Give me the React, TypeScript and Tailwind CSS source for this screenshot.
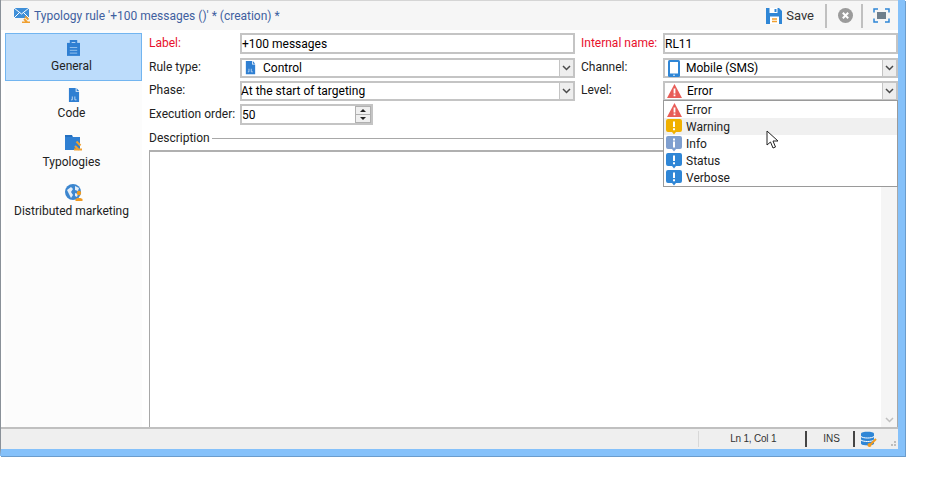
import type { ReactNode } from "react";

const font = "font-['Roboto','Noto_Sans',sans-serif]";

function DocIcon({ size = 14 }: { size?: number }) {
  return (
    <svg width={size} height={size * 1.2} viewBox="0 0 14 17" className="shrink-0">
      <path d="M1 0h8v4.500h4V17H1z" fill="#2f7fd2" />
      <path d="M10 0l3 3.500h-3z" fill="#2f7fd2" />
      <path d="M5 10v4M5 14H3.500M8 10v4M8 14h2" stroke="#cfe3f7" strokeWidth="1" fill="none" />
    </svg>
  );
}

function ClipboardIcon() {
  return (
    <svg width="13" height="16" viewBox="0 0 14 17">
      <path d="M0 3h14v14H0z" fill="#2f7fd2" />
      <path d="M4 3V1h6v2" fill="none" stroke="#2f7fd2" strokeWidth="2" />
      <path d="M3 8h8M3 11h8M3 14h8" stroke="#9cc6ee" strokeWidth="1" />
    </svg>
  );
}

function FolderIcon() {
  return (
    <svg width="18" height="16" viewBox="0 0 18 16">
      <path d="M0 0h7l1 2h7v13H0z" fill="#2f7fd2" />
      <path d="M0 1h7" stroke="#1d62ad" strokeWidth="1" />
      <path d="M9 14.500h8M14 15l-4-4M11.500 6.500l4 4" stroke="#f0a030" strokeWidth="2.200" fill="none" />
    </svg>
  );
}

function GlobeIcon() {
  return (
    <svg width="18" height="17" viewBox="0 0 18 17">
      <circle cx="8" cy="8" r="8" fill="#3c86cf" />
      <path d="M2 6l4-3 2 2-2 3 2 3-2 3-2-4zM10 2l4 2-1 3-3-1zM10 9l3 1-1 3-2-1z" fill="#e4eef8" />
      <circle cx="14" cy="9" r="2.200" fill="#ee9a22" />
      <path d="M10.500 17v-1.500c0-2 7-2 7 0V17z" fill="#ee9a22" />
    </svg>
  );
}

function MailIcon() {
  return (
    <svg width="17" height="15" viewBox="0 0 17 15">
      <path d="M0 0h15v10H0z" fill="#3f8fd8" />
      <path d="M0 0l7.500 6L15 0M0 10l5.500-5.500M15 10L9.500 4.500" stroke="#fff" strokeWidth="1" fill="none" />
      <path d="M8 14.500h8M13 14l-3-3M11 8.500l3.500 3" stroke="#f0a030" strokeWidth="1.800" fill="none" />
    </svg>
  );
}

function SaveIcon() {
  return (
    <svg width="16" height="16" viewBox="0 0 16 16">
      <path d="M0 0h13l3 3v13H0z" fill="#2f86d6" />
      <path d="M3.500 0h8v5h-8z" fill="#fff" />
      <path d="M8.500 1h2v3h-2z" fill="#2f86d6" />
      <path d="M4 8.500h9V16H4z" fill="#fff" />
      <path d="M6 11h5M6 13.500h5" stroke="#f0a030" strokeWidth="1.500" />
    </svg>
  );
}

function CloseCircleIcon() {
  return (
    <svg width="15" height="15" viewBox="0 0 15 15">
      <circle cx="7.500" cy="7.500" r="7.500" fill="#9b9b9b" />
      <path d="M4.800 4.800l5.400 5.400M10.200 4.800l-5.400 5.400" stroke="#fff" strokeWidth="2" />
    </svg>
  );
}

function FullscreenIcon() {
  return (
    <svg width="17" height="15" viewBox="0 0 17 15">
      <path d="M1 4.500V1h4M12 1h4v3.500M16 10.500V14h-4M5 14H1v-3.500" fill="none" stroke="#2f86d6" strokeWidth="1.500" />
      <path d="M4 4h9v7H4z" fill="#6f7f8c" />
    </svg>
  );
}

function MobileIcon() {
  return (
    <svg width="12" height="17" viewBox="0 0 12 17" className="shrink-0">
      <rect x="0" y="0" width="12" height="17" rx="1.500" fill="#2f86d6" />
      <path d="M2 2h8v11.500H2z" fill="#fff" />
      <circle cx="6" cy="15.200" r="0.800" fill="#fff" />
    </svg>
  );
}

function TriangleIcon() {
  return (
    <svg width="15" height="14" viewBox="0 0 15 14" className="shrink-0">
      <path d="M7.500 0L15 14H0z" fill="#e85d58" />
      <path d="M7.500 4.500v5M7.500 10.500v1.800" stroke="#fff" strokeWidth="1.800" />
    </svg>
  );
}

function BubbleIcon({ color, glyph }: { color: string; glyph: "!" | "i" }) {
  return (
    <svg width="16" height="16" viewBox="0 0 16 16" className="shrink-0">
      <path d="M2 0h12a2 2 0 012 2v9a2 2 0 01-2 2h-4l-2 2.500L6 13H2a2 2 0 01-2-2V2a2 2 0 012-2z" fill={color} />
      {glyph === "!" ? (
        <path d="M8 2.500v5.500M8 9.300v2" stroke="#fff" strokeWidth="2" />
      ) : (
        <path d="M8 2.500v2M8 5.500v6" stroke="#fff" strokeWidth="2" />
      )}
    </svg>
  );
}

function DbIcon() {
  return (
    <svg width="16" height="16" viewBox="0 0 16 16">
      <path d="M0 2.500C0 0 13 0 13 2.500v10c0 2.500-13 2.500-13 0z" fill="#2f86d6" />
      <path d="M0 5.500c2 2 11 2 13 0M0 9c2 2 11 2 13 0" stroke="#fff" strokeWidth="1" fill="none" />
      <path d="M8 15l7-7" stroke="#f09a20" strokeWidth="2" />
      <circle cx="8.500" cy="14" r="2" fill="#f09a20" />
    </svg>
  );
}

function Chevron() {
  return (
    <svg width="9" height="6" viewBox="0 0 9 6">
      <path d="M1 1l3.500 3.500L8 1" fill="none" stroke="#4a4a4a" strokeWidth="1.500" />
    </svg>
  );
}

function Combo({ children, className }: { children: ReactNode; className: string }) {
  return (
    <div className={`flex items-stretch border-2 border-[#c4c4c4] bg-white ${className}`}>
      <div className="flex min-w-0 flex-1 items-center">{children}</div>
      <div className="flex w-[14px] items-center justify-center border-l border-[#c4c4c4] bg-[#eeeeee]">
        <Chevron />
      </div>
    </div>
  );
}

function Label({ children, red, className = "" }: { children: ReactNode; red?: boolean; className?: string }) {
  return <div className={`-translate-y-px whitespace-nowrap ${red ? "text-[#e8102c]" : "text-[#222222]"} ${className}`}>{children}</div>;
}

function NavItem({ icon, label, active, className = "", labelClassName = "mt-[1px]" }: { icon: ReactNode; label: string; active?: boolean; className?: string; labelClassName?: string }) {
  return (
    <div
      className={`flex h-[48px] flex-col items-center pt-[5px] ${active ? "border border-[#72b5f0] bg-[#bcdcfb]" : ""} ${className}`}
    >
      <div className="flex h-[18px] items-center justify-center">{icon}</div>
      <div className={`whitespace-nowrap pr-[4px] leading-[16px] text-[#222222] ${labelClassName}`}>{label}</div>
    </div>
  );
}

const levels = [
  { name: "Error", icon: <TriangleIcon /> },
  { name: "Warning", icon: <BubbleIcon color="#f0b000" glyph="!" /> },
  { name: "Info", icon: <BubbleIcon color="#7f9fcf" glyph="i" /> },
  { name: "Status", icon: <BubbleIcon color="#2f86d6" glyph="!" /> },
  { name: "Verbose", icon: <BubbleIcon color="#2f86d6" glyph="!" /> },
];

export default function App() {
  return (
    <div className={`h-[477px] w-[926px] overflow-hidden bg-white text-[12px] leading-[16px] ${font}`}>
      <div className="flex h-[456px] w-[905px] flex-col border-r-[7px] border-b-[7px] border-[#85c1fa] border-l border-l-[#8a9199] shadow-[1px_1px_0_#6b9ccc]">
        {/* Title bar */}
        <div className="flex h-[30px] shrink-0 items-center border-t border-[#d5d5d5] bg-[#f6f6f6] pl-[13px] pr-[8px]">
          <MailIcon />
          <div className="ml-[3px] flex-1 text-[#3f5f9f]">Typology rule '+100 messages ()' * (creation) *</div>
          <SaveIcon />
          <div className="ml-[4px] text-[13px] text-[#333333]">Save</div>
          <div className="ml-[11px] h-[24px] w-[2px] bg-[#c0c0c0]" />
          <div className="ml-[11px]"><CloseCircleIcon /></div>
          <div className="ml-[8px] h-[24px] w-[2px] bg-[#c0c0c0]" />
          <div className="ml-[10px]"><FullscreenIcon /></div>
        </div>

        <div className="flex min-h-0 flex-1 bg-white">
          {/* Sidebar */}
          <div className="ml-[4px] flex w-[137px] shrink-0 flex-col bg-[#fcfcfc] pt-[3px]">
            <NavItem icon={<ClipboardIcon />} label="General" active />
            <NavItem icon={<DocIcon size={12} />} label="Code" />
            <NavItem icon={<FolderIcon />} label="Typologies" labelClassName="mt-[2px]" />
            <NavItem icon={<GlobeIcon />} label="Distributed marketing" className="mt-[1px]" labelClassName="mt-[2px]" />
          </div>

          {/* Form */}
          <div className="relative ml-[7px] flex min-w-0 flex-1 flex-col pt-[3px]">
            <div className="flex h-[21px] items-center">
              <Label red className="w-[91px]">Label:</Label>
              <div className="flex h-[21px] w-[335px] items-center border-2 border-[#c4c4c4]">+100 messages</div>
              <Label red className="ml-[6px] w-[82px]">Internal name:</Label>
              <div className="flex h-[21px] flex-1 items-center border-2 border-[#c4c4c4]">RL11</div>
            </div>
            <div className="mt-[4px] flex h-[20px] items-center">
              <Label className="w-[91px]">Rule type:</Label>
              <Combo className="h-[20px] w-[335px]">
                <div className="ml-[3px]"><DocIcon size={11} /></div>
                <span className="ml-[7px]">Control</span>
              </Combo>
              <Label className="ml-[6px] w-[82px]">Channel:</Label>
              <Combo className="h-[20px] flex-1">
                <div className="ml-[3px]"><MobileIcon /></div>
                <span className="ml-[6px]">Mobile (SMS)</span>
              </Combo>
            </div>
            <div className="mt-[3px] flex h-[20px] items-center">
              <Label className="w-[91px]">Phase:</Label>
              <Combo className="h-[20px] w-[335px]">
                <span className="-ml-px">At the start of targeting</span>
              </Combo>
              <Label className="ml-[6px] w-[82px]">Level:</Label>
              <Combo className="h-[20px] flex-1">
                <div className="ml-[2px]"><TriangleIcon /></div>
                <span className="ml-[5px]">Error</span>
              </Combo>
            </div>
            <div className="mt-[3px] flex h-[21px] items-center">
              <Label className="w-[91px]">Execution order:</Label>
              <div className="flex h-[21px] w-[133px] items-center border-2 border-[#c4c4c4]">
                <span className="flex-1">50</span>
                <div className="flex h-[17px] w-[16px] flex-col border border-[#b0b0b0]">
                  <div className="flex flex-1 items-center justify-center border-b border-[#b0b0b0] bg-[#efefef]">
                    <div className="h-0 w-0 border-x-[3px] border-b-[3px] border-x-transparent border-b-[#222222]" />
                  </div>
                  <div className="flex flex-1 items-center justify-center bg-[#efefef]">
                    <div className="h-0 w-0 border-x-[3px] border-t-[3px] border-x-transparent border-t-[#222222]" />
                  </div>
                </div>
              </div>
            </div>

            <div className="mt-[5px] flex h-[16px] items-center">
              <span className="text-[#222222]">Description</span>
              <div className="ml-[2px] h-px flex-1 bg-[#a8a8a8]" />
            </div>
            <div className="mt-[4px] flex min-h-0 flex-1 justify-end border-x border-t-2 border-x-[#a8a8a8] border-t-[#b0b0b0] bg-white">
              <div className="flex w-[16px] flex-col justify-end bg-[#f5f5f5] pb-[4px]">
                <div className="flex justify-center opacity-30"><Chevron /></div>
              </div>
            </div>

            {/* Level dropdown */}
            <div className="absolute left-[514px] top-[70px] z-10 w-[235px] border border-[#9a9a9a] bg-white">
              {levels.map((l) => (
                <div
                  key={l.name}
                  className={`flex h-[17px] items-center pl-[2px] ${l.name === "Warning" ? "bg-[#f0f0f0]" : ""}`}
                >
                  <div className="flex w-[16px] justify-center">{l.icon}</div>
                  <span className="ml-[4px] text-[#222222]">{l.name}</span>
                </div>
              ))}
            </div>
            <svg width="14" height="20" viewBox="0 0 14 20" className="absolute left-[617px] top-[100px] z-20">
              <path d="M1 1v14l3.500-3 2.500 6 2.500-1-2.500-6H12z" fill="#fff" stroke="#222" strokeWidth="1" />
            </svg>
          </div>
        </div>

        {/* Status bar */}
        <div className="flex h-[22px] shrink-0 items-center justify-end border-t-2 border-[#c0c0c0] bg-[#efefef] text-[10px]">
          <div className="mr-[31px] h-[16px] w-px bg-[#d8d8d8]" />
          <span className="font-['Liberation_Sans',sans-serif] tracking-[-0.2px] text-[#333333]">Ln 1, Col 1</span>
          <div className="ml-[29px] h-[16px] w-[2px] bg-[#444444]" />
          <span className="ml-[16px] font-['Liberation_Sans',sans-serif] text-[#333333]">INS</span>
          <div className="ml-[13px] h-[16px] w-[2px] bg-[#444444]" />
          <div className="ml-[6px]"><DbIcon /></div>
          <div className="ml-[11px] mr-[2px] mt-[8px] grid grid-cols-3 gap-px">
            <div className="h-[2px] w-[2px]" />
            <div className="h-[2px] w-[2px]" />
            <div className="h-[2px] w-[2px] bg-[#bdbdbd]" />
            <div className="h-[2px] w-[2px]" />
            <div className="h-[2px] w-[2px] bg-[#bdbdbd]" />
            <div className="h-[2px] w-[2px] bg-[#bdbdbd]" />
          </div>
        </div>
      </div>
    </div>
  );
}
